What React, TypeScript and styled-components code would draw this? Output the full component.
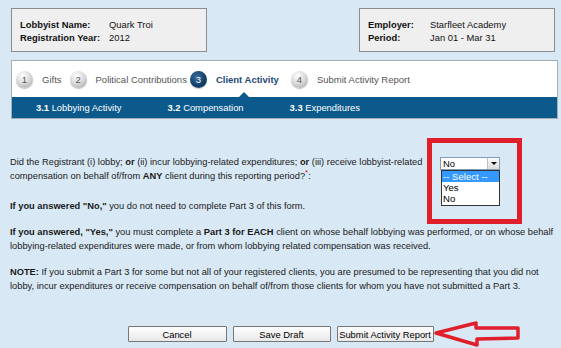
import React from 'react';
import styled, { createGlobalStyle } from 'styled-components';

const GlobalStyle = createGlobalStyle`
  html, body {
    margin: 0;
    padding: 0;
    background: #d8e8f4;
  }
  body {
    font-family: "Liberation Sans", Arial, sans-serif;
    font-size: 9.3px;
    color: #1a1a1a;
  }
`;

const Page = styled.div`
  width: 561px;
  height: 348px;
  overflow: hidden;
  position: relative;
`;

const HeaderRow = styled.div`
  display: flex;
  justify-content: space-between;
  padding: 8px 6px 0 11px;
`;

const InfoBox = styled.div<{ $labelWidth: number }>`
  box-sizing: border-box;
  width: 196px;
  height: 44px;
  background: #efefef;
  border: 1px solid #8c8c8c;
  padding: 9px 0 0 8px;
  display: grid;
  grid-template-columns: ${p => p.$labelWidth}px auto;
  grid-auto-rows: 13px;
  line-height: 13px;
  font-size: 9.4px;
  color: #111;
`;

const InfoLabel = styled.div`
  font-weight: bold;
`;

const InfoValue = styled.div``;

const StepsPanel = styled.div`
  box-sizing: border-box;
  margin: 8px 0 0 11px;
  width: 547px;
  border: 1px solid #a3aeb7;
  background: #fff;
`;

const StepsRow = styled.div`
  display: flex;
  align-items: center;
  height: 36px;
  padding-left: 4px;
`;

const Step = styled.div<{ $active?: boolean; $gap: number }>`
  position: relative;
  display: flex;
  align-items: center;
  height: 100%;
  margin-right: ${p => p.$gap}px;
  color: ${p => (p.$active ? '#1c4a78' : '#555')};
  font-weight: ${p => (p.$active ? 'bold' : 'normal')};
  font-size: 9.5px;

  ${p =>
    p.$active &&
    `
    &::after {
      content: '';
      position: absolute;
      bottom: 0;
      left: 49px;
      border-left: 5px solid transparent;
      border-right: 5px solid transparent;
      border-bottom: 5px solid #0c5a8c;
    }
  `}
`;

const StepCircle = styled.span<{ $active?: boolean }>`
  width: 17px;
  height: 17px;
  border-radius: 50%;
  display: inline-flex;
  align-items: center;
  justify-content: center;
  margin-right: 9px;
  font-weight: normal;
  font-size: 9.5px;
  color: ${p => (p.$active ? '#fff' : '#555')};
  background: ${p =>
    p.$active
      ? 'radial-gradient(circle at 40% 35%, #3a6e9e 0%, #123f6b 55%, #0a2f55 100%)'
      : 'radial-gradient(circle at 40% 30%, #ffffff 0%, #d8d8d8 50%, #9c9c9c 100%)'};
  box-shadow: 0 1px 1px rgba(0, 0, 0, 0.25);
`;

const SubBar = styled.div`
  display: flex;
  align-items: center;
  gap: 46px;
  height: 21px;
  padding-left: 24px;
  background: #0c5a8c;
  color: #fff;
  font-size: 9.4px;
`;

const SubItem = styled.span`
  b {
    font-weight: bold;
  }
`;

const Content = styled.div`
  padding: 36px 0 0 10px;
  line-height: 14px;
`;

const QuestionRow = styled.div`
  position: relative;
  display: flex;
  align-items: flex-start;
`;

const QuestionText = styled.div`
  width: 430px;
  white-space: nowrap;
`;

const Required = styled.sup`
  color: #d0101a;
  font-size: 8px;
  line-height: 0;
`;

const SelectWrap = styled.div`
  position: relative;
  margin-top: 2px;
`;

const SelectBox = styled.div`
  box-sizing: border-box;
  width: 60px;
  height: 13px;
  background: #fff;
  border: 1px solid #7f9db9;
  display: flex;
  align-items: center;
  padding-left: 2px;
  font-size: 9.4px;
  line-height: 11px;
  color: #000;
`;

const SelectValue = styled.span`
  flex: 1;
`;

const SelectArrow = styled.span`
  box-sizing: border-box;
  width: 12px;
  height: 11px;
  border-left: 1px solid #b6c3cf;
  background: linear-gradient(#fbfbfb, #dcdcdc);
  display: flex;
  align-items: center;
  justify-content: center;

  &::before {
    content: '';
    border-left: 3px solid transparent;
    border-right: 3px solid transparent;
    border-top: 3px solid #111;
  }
`;

const DropList = styled.div`
  position: absolute;
  top: 13px;
  left: 1px;
  box-sizing: border-box;
  width: 59px;
  border: 1px solid #333;
  background: #fff;
  padding-bottom: 1px;
`;

const DropItem = styled.div<{ $selected?: boolean }>`
  height: 11px;
  line-height: 11px;
  padding-left: 1px;
  font-size: 9.6px;
  background: ${p => (p.$selected ? '#3399ff' : '#fff')};
  color: ${p => (p.$selected ? '#fff' : '#000')};
`;

const Highlight = styled.div`
  position: absolute;
  left: 417px;
  top: -17px;
  width: 95px;
  height: 86px;
  box-sizing: border-box;
  border: 5px solid #e01f2b;
`;

const Para = styled.p<{ $top: number }>`
  margin: ${p => p.$top}px 0 0;
  white-space: nowrap;
`;

const ButtonRow = styled.div`
  position: relative;
  display: flex;
  justify-content: center;
  gap: 6px;
  margin-top: 33px;
`;

const Button = styled.button<{ $w: number }>`
  box-sizing: border-box;
  width: ${p => p.$w}px;
  height: 16px;
  padding: 0;
  border: 1px solid #767676;
  border-radius: 1px;
  background: linear-gradient(#fefefe, #e8e8e8);
  font-family: "Liberation Sans", Arial, sans-serif;
  font-size: 9.4px;
  color: #000;
`;

const ArrowMark = styled.svg`
  position: absolute;
  left: 426px;
  top: -6px;
`;

export default function App() {
  return (
    <Page>
      <GlobalStyle />
      <HeaderRow>
        <InfoBox $labelWidth={89}>
          <InfoLabel>Lobbyist Name:</InfoLabel>
          <InfoValue>Quark Troi</InfoValue>
          <InfoLabel>Registration Year:</InfoLabel>
          <InfoValue>2012</InfoValue>
        </InfoBox>
        <InfoBox $labelWidth={62}>
          <InfoLabel>Employer:</InfoLabel>
          <InfoValue>Starfleet Academy</InfoValue>
          <InfoLabel>Period:</InfoLabel>
          <InfoValue>Jan 01 - Mar 31</InfoValue>
        </InfoBox>
      </HeaderRow>

      <StepsPanel>
        <StepsRow>
          <Step $gap={8}>
            <StepCircle>1</StepCircle>Gifts
          </Step>
          <Step $gap={3}>
            <StepCircle>2</StepCircle>Political Contributions
          </Step>
          <Step $gap={12} $active>
            <StepCircle $active>3</StepCircle>Client Activity
          </Step>
          <Step $gap={0}>
            <StepCircle>4</StepCircle>Submit Activity Report
          </Step>
        </StepsRow>
        <SubBar>
          <SubItem><b>3.1</b> Lobbying Activity</SubItem>
          <SubItem><b>3.2</b> Compensation</SubItem>
          <SubItem><b>3.3</b> Expenditures</SubItem>
        </SubBar>
      </StepsPanel>

      <Content>
        <QuestionRow>
          <QuestionText>
            Did the Registrant (i) lobby; <b>or</b> (ii) incur lobbying-related expenditures; <b>or</b> (iii) receive lobbyist-related
            <br />
            compensation on behalf of/from <b>ANY</b> client during this reporting period?<Required>*</Required>:
          </QuestionText>
          <SelectWrap>
            <SelectBox>
              <SelectValue>No</SelectValue>
              <SelectArrow />
            </SelectBox>
            <DropList>
              <DropItem $selected>-- Select --</DropItem>
              <DropItem>Yes</DropItem>
              <DropItem>No</DropItem>
            </DropList>
          </SelectWrap>
          <Highlight />
        </QuestionRow>

        <Para $top={16}>
          <b>If you answered "No,"</b> you do not need to complete Part 3 of this form.
        </Para>
        <Para $top={12}>
          <b>If you answered, "Yes,"</b> you must complete a <b>Part 3 for EACH</b> client on whose behalf lobbying was performed, or on whose behalf
          <br />
          lobbying-related expenditures were made, or from whom lobbying related compensation was received.
        </Para>
        <Para $top={12}>
          <b>NOTE:</b> If you submit a Part 3 for some but not all of your registered clients, you are presumed to be representing that you did not
          <br />
          lobby, incur expenditures or receive compensation on behalf of/from those clients for whom you have not submitted a Part 3.
        </Para>
      </Content>

      <ButtonRow>
        <Button $w={99}>Cancel</Button>
        <Button $w={98}>Save Draft</Button>
        <Button $w={97}>Submit Activity Report</Button>
        <ArrowMark width="100" height="30" viewBox="0 0 100 30">
          <path
            d="M10 13 L50 3 L50 8 L92 8 L92 18 L51 19 L51 25 Z"
            fill="none"
            stroke="#e01f2b"
            strokeWidth="3.5"
            strokeLinejoin="round"
          />
        </ArrowMark>
      </ButtonRow>
    </Page>
  );
}
